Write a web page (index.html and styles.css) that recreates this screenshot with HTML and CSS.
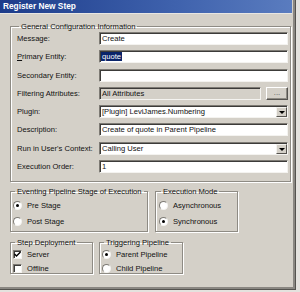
FILE: index.html
```html
<!DOCTYPE html>
<html lang="en">
<head>
    <meta charset="UTF-8">
    <title>Register New Step</title>
    <link rel="stylesheet" href="styles.css">
</head>
<body>
    <div class="window">
        <div class="titlebar">Register New Step</div>

        <div class="client">
            <!-- General settings -->
            <fieldset class="group general">
                <legend>General Configuration Information</legend>
                <div class="form-grid">
                    <label>Message:</label>
                    <div class="field">Create</div>

                    <label><u>P</u>rimary Entity:</label>
                    <div class="field"><span class="selected">quote</span></div>

                    <label>Secondary Entity:</label>
                    <div class="field"></div>

                    <label>Filtering Attributes:</label>
                    <div class="field-with-button">
                        <div class="field disabled">All Attributes</div>
                        <div class="button">...</div>
                    </div>

                    <label>Plugin:</label>
                    <div class="field select">[Plugin] LeviJames.Numbering<span class="arrow"></span></div>

                    <label>Description:</label>
                    <div class="field">Create of quote in Parent Pipeline</div>

                    <label>Run in User's Context:</label>
                    <div class="field select">Calling User<span class="arrow"></span></div>

                    <label>Execution Order:</label>
                    <div class="field">1</div>
                </div>
            </fieldset>

            <div class="group-row first-row">
                <fieldset class="group stage">
                    <legend>Eventing Pipeline Stage of Execution</legend>
                    <div class="option"><span class="radio checked"></span>Pre Stage</div>
                    <div class="option"><span class="radio"></span>Post Stage</div>
                </fieldset>
                <fieldset class="group mode">
                    <legend>Execution Mode</legend>
                    <div class="option"><span class="radio"></span>Asynchronous</div>
                    <div class="option"><span class="radio checked"></span>Synchronous</div>
                </fieldset>
            </div>

            <div class="group-row second-row">
                <fieldset class="group deployment">
                    <legend>Step Deployment</legend>
                    <div class="option"><span class="checkbox"><svg width="7" height="7" viewBox="0 0 7 7"><path d="M0.5 3 L2.5 5 L6.5 1" fill="none" stroke="#000" stroke-width="1.4"/></svg></span>Server</div>
                    <div class="option"><span class="checkbox"></span>Offline</div>
                </fieldset>
                <fieldset class="group pipeline">
                    <legend>Triggering Pipeline</legend>
                    <div class="option"><span class="radio checked"></span>Parent Pipeline</div>
                    <div class="option"><span class="radio"></span>Child Pipeline</div>
                </fieldset>
            </div>
        </div>
    </div>
</body>
</html>
```

FILE: styles.css
```css
body {
    margin: 0;
    background-color: #e4e2de;
    font-family: "Liberation Sans", Arial, sans-serif;
    font-size: 7.6px;
    color: #111;
    overflow: hidden;
}
.window {
    width: 295px;
    height: 289px;
    background-color: #d4d0c8;
    border-right: 1px solid #55534f;
    border-bottom: 1px solid #55534f;
    box-shadow: inset -2px -2px 0 #8a8782;
    display: flex;
    flex-direction: column;
}
.titlebar {
    height: 13px;
    line-height: 13px;
    padding-left: 3px;
    margin-right: 3px;
    background: linear-gradient(90deg, #1d3c8a, #3f62ad 60%, #5a7cbf);
    color: #fff;
    font-weight: bold;
    font-size: 8.3px;
    border-bottom: 1px solid #e8e6e2;
}
.client {
    padding: 8px 0 0 10px;
}
.group {
    margin: 0;
    padding: 0 2px 8px 6px;
    border: 1px solid #8e8b84;
    box-shadow: 1px 1px 0 #fff, inset 1px 1px 0 #fff;
    min-width: 0;
}
.group legend {
    padding: 0 2px;
    margin-left: 2px;
    line-height: 9px;
}
.general {
    width: 271px;
}
.form-grid {
    display: grid;
    grid-template-columns: 82px 1fr;
    grid-auto-rows: 13px;
    row-gap: 5.3px;
    padding-top: 1px;
}
.form-grid label {
    line-height: 13px;
}
.field {
    position: relative;
    height: 13px;
    line-height: 12px;
    padding-left: 2px;
    box-sizing: border-box;
    background-color: #fff;
    border-top: 1px solid #7d7a74;
    border-left: 1px solid #7d7a74;
    border-right: 1px solid #f4f3f0;
    border-bottom: 1px solid #f4f3f0;
    box-shadow: inset 1px 1px 0 #3c3b39;
    white-space: nowrap;
    overflow: hidden;
}
.field.disabled {
    background-color: #d4d0c8;
}
.selected {
    background-color: #0a246a;
    color: #fff;
    padding: 0 1px;
    margin-left: -1px;
}
.field-with-button {
    display: flex;
    gap: 5px;
}
.field-with-button .field {
    flex: 1;
}
.button {
    width: 22px;
    height: 13px;
    box-sizing: border-box;
    border-top: 1px solid #fff;
    border-left: 1px solid #fff;
    border-right: 1px solid #55534f;
    border-bottom: 1px solid #55534f;
    box-shadow: inset -1px -1px 0 #8e8b84;
    text-align: center;
    line-height: 9px;
    color: #555;
}
.arrow {
    position: absolute;
    top: 1px;
    right: 0;
    width: 11px;
    height: 10px;
    box-sizing: border-box;
    background-color: #d4d0c8;
    border-top: 1px solid #f4f3f0;
    border-left: 1px solid #f4f3f0;
    border-right: 1px solid #55534f;
    border-bottom: 1px solid #55534f;
}
.arrow::after {
    content: "";
    position: absolute;
    left: 2px;
    top: 3px;
    border-left: 3px solid transparent;
    border-right: 3px solid transparent;
    border-top: 3px solid #000;
}
.group-row {
    display: flex;
    align-items: flex-start;
}
.first-row {
    margin-top: 5px;
    gap: 7px;
}
.second-row {
    margin-top: 6px;
    gap: 6px;
}
.group-row .group {
    padding: 1px 2px 2px 2px;
}
.stage {
    width: 132px;
}
.mode {
    width: 76px;
    padding-left: 3px !important;
}
.deployment {
    width: 77px;
    height: 31px;
}
.pipeline {
    width: 78px;
    height: 31px;
}
.option {
    display: flex;
    align-items: center;
    gap: 5px;
    height: 16px;
}
.second-row .option {
    height: 17px;
}
.second-row .option:first-of-type {
    height: 12px;
}
.radio {
    width: 9px;
    height: 9px;
    box-sizing: border-box;
    border-radius: 50%;
    background-color: #fff;
    border: 1px solid;
    border-color: #7d7a74 #f4f3f0 #f4f3f0 #7d7a74;
    position: relative;
}
.radio.checked::after {
    content: "";
    position: absolute;
    left: 2px;
    top: 2px;
    width: 3px;
    height: 3px;
    border-radius: 50%;
    background-color: #000;
}
.checkbox {
    width: 9px;
    height: 9px;
    box-sizing: border-box;
    background-color: #fff;
    border: 1px solid;
    border-color: #7d7a74 #f4f3f0 #f4f3f0 #7d7a74;
    box-shadow: inset 1px 1px 0 #3c3b39;
    display: flex;
    align-items: center;
    justify-content: center;
}
```
